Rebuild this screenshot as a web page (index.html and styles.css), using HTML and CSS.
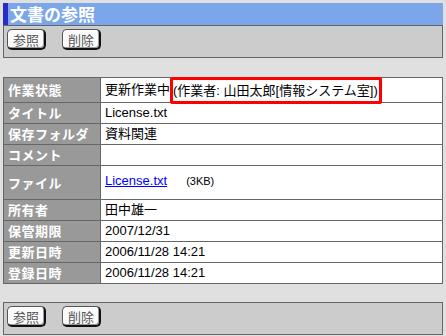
FILE: index.html
```html
<!DOCTYPE html>
<html lang="ja">
  <head>
    <meta charset="UTF-8" />
    <title>文書の参照</title>
    <link rel="stylesheet" href="styles.css">
  </head>
  <body>
    <div class="page-title">文書の参照</div>
    <div class="toolbar">
      <button class="tool-btn">参照</button>
      <button class="tool-btn">削除</button>
    </div>

    <table class="detail">
      <tr class="row-status">
        <th>作業状態</th>
        <td>更新作業中<span class="mark">(作業者: 山田太郎[情報システム室])</span></td>
      </tr>
      <tr>
        <th>タイトル</th>
        <td>License.txt</td>
      </tr>
      <tr>
        <th>保存フォルダ</th>
        <td>資料関連</td>
      </tr>
      <tr>
        <th>コメント</th>
        <td></td>
      </tr>
      <tr class="row-file">
        <th>ファイル</th>
        <td><a href="#" class="file-link">License.txt</a><span class="file-size">(3KB)</span></td>
      </tr>
      <tr>
        <th>所有者</th>
        <td>田中雄一</td>
      </tr>
      <tr>
        <th>保管期限</th>
        <td>2007/12/31</td>
      </tr>
      <tr>
        <th>更新日時</th>
        <td>2006/11/28 14:21</td>
      </tr>
      <tr>
        <th>登録日時</th>
        <td>2006/11/28 14:21</td>
      </tr>
    </table>

    <div class="toolbar toolbar-bottom">
      <button class="tool-btn">参照</button>
      <button class="tool-btn">削除</button>
    </div>
  </body>
</html>
```

FILE: styles.css
```css
body {
  margin: 3px;
  background-color: #e0e0e0;
  font-family: "Liberation Sans", "Noto Sans CJK JP", sans-serif;
  font-size: 13px;
  color: #000;
}
.page-title {
  height: 22px;
  line-height: 22px;
  width: 434px;
  background-color: #7ca6ea;
  border-left: 5px solid #2b2bc8;
  padding-left: 2px;
  color: #fff;
  font-weight: bold;
  font-size: 17px;
  font-family: "Noto Sans CJK JP", sans-serif;
}
.toolbar {
  box-sizing: border-box;
  width: 440px;
  height: 33px;
  background-color: #cccccc;
  border: 1px solid #666;
  padding: 3px 3px 0;
  display: flex;
  gap: 16px;
  align-items: flex-start;
}
.toolbar-bottom {
  margin-top: 18px;
}
.tool-btn {
  box-sizing: border-box;
  width: 39px;
  height: 21px;
  padding: 0;
  background-color: #fafafa;
  border: 1px solid #555;
  border-right: 2px solid #111;
  border-bottom: 2px solid #111;
  border-radius: 5px;
  box-shadow: inset 1px 1px #fff, inset -1px -1px #999;
  color: #555;
  font-family: "Noto Sans CJK JP", sans-serif;
  font-size: 13px;
  line-height: 17px;
}
.detail {
  margin-top: 19px;
  width: 440px;
  border-collapse: collapse;
  border: 1px solid #666;
}
.detail th,
.detail td {
  border: 1px solid #666;
  height: 20px;
  padding: 0 4px;
  line-height: 16px;
  text-align: left;
  vertical-align: middle;
}
.detail th {
  width: 88px;
  background-color: #999;
  color: #fff;
  font-weight: bold;
  font-family: "Noto Sans CJK JP", sans-serif;
  letter-spacing: 0.5px;
}
.detail td {
  background-color: #fff;
}
.row-status th,
.row-status td {
  height: 24px;
}
.mark {
  display: inline-block;
  border: 3px solid #f00;
  border-radius: 2px;
  padding: 0 1px 0 0;
  line-height: 21px;
  margin: -2px 0;
  vertical-align: middle;
}
.row-file th,
.row-file td {
  height: 30px;
}
.row-file td {
  padding-bottom: 3px;
}
.file-link {
  color: #0000ff;
}
.file-size {
  font-size: 11px;
  margin-left: 19px;
}
```
